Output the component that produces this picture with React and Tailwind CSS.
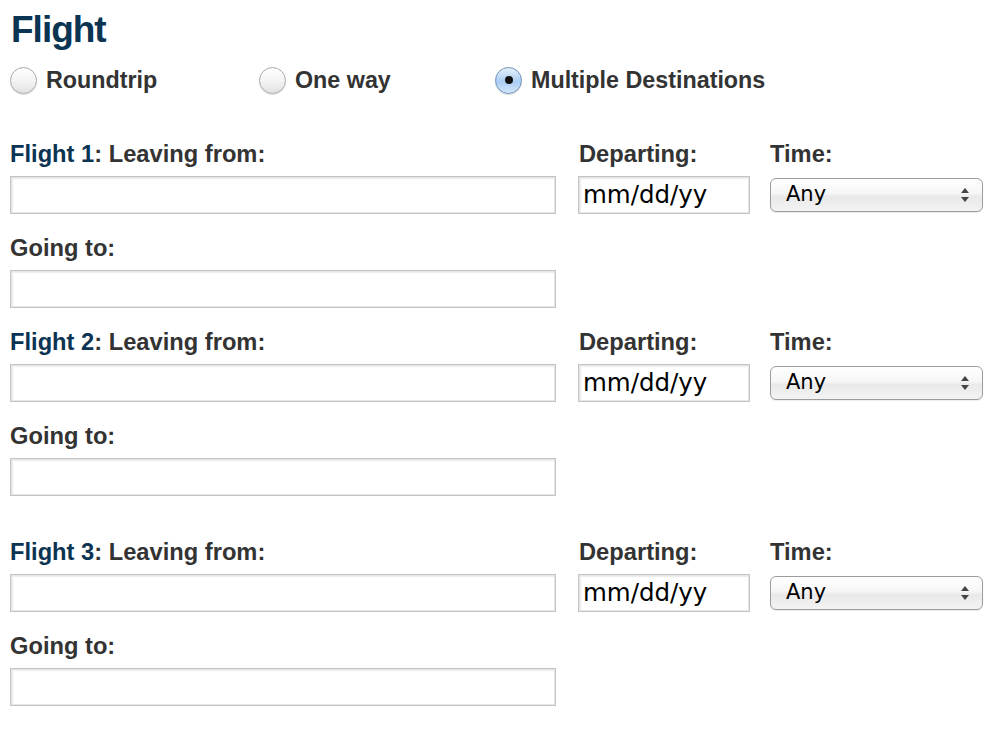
import React from "react";

const navy = "text-[#0b3352]";

function Radio({ checked }) {
  return (
    <span
      className={
        "relative flex h-[27px] w-[27px] shrink-0 items-center justify-center rounded-full border " +
        (checked
          ? "border-[#6f8fb4] bg-[linear-gradient(#e6f1fc,#a9cdf3_55%,#d4e8fb)] shadow-[0_1px_1px_rgba(0,0,0,0.15)]"
          : "border-[#a9a9a9] bg-[linear-gradient(#ffffff,#f4f4f4_50%,#e2e2e2)] shadow-[0_1px_1px_rgba(0,0,0,0.12)]")
      }
    >
      {checked && <span className="h-[8px] w-[8px] rounded-full bg-[#111]" />}
    </span>
  );
}

function TextBox({ className = "", children }) {
  return (
    <div
      className={
        "flex h-[38px] items-center border border-[#c4c4c4] bg-white shadow-[inset_0_0_0_1px_#e6e6e6,inset_1px_1px_1px_1px_#ececec] " +
        className
      }
    >
      {children}
    </div>
  );
}

function Select() {
  return (
    <div className="mt-[2px] flex h-[34px] w-[213px] items-center justify-between rounded-[6px] border border-[#9c9c9c] bg-[linear-gradient(#ffffff,#f6f6f6_45%,#e9e9e9_55%,#f3f3f3)] pl-[15px] pr-[12px] shadow-[0_1px_1px_rgba(0,0,0,0.08)]">
      <span className="font-['DejaVu_Sans',sans-serif] text-[21px] text-black">Any</span>
      <svg width="10" height="16" viewBox="0 0 10 16">
        <path d="M5 1 L9 6 L1 6 Z" fill="#444" />
        <path d="M5 15 L9 10 L1 10 Z" fill="#444" />
      </svg>
    </div>
  );
}

function Label({ children, className = "" }) {
  return (
    <div className={"h-[26px] whitespace-nowrap text-[23.7px] font-bold leading-[26px] text-[#333] " + className}>
      {children}
    </div>
  );
}

function FlightBlock({ n, className = "" }) {
  return (
    <div className={"flex flex-col " + className}>
      <div className="flex">
        <div className="flex w-[546px] flex-col gap-[9px]">
          <Label>
            <span className={navy}>Flight {n}</span>: Leaving from:
          </Label>
          <TextBox />
        </div>
        <div className="ml-[22px] flex w-[172px] flex-col gap-[9px]">
          <Label className="pl-[1px]">Departing:</Label>
          <TextBox className="pl-[4px]">
            <span className="font-['DejaVu_Sans',sans-serif] text-[24.5px] leading-none text-black">mm/dd/yy</span>
          </TextBox>
        </div>
        <div className="ml-[20px] flex flex-col gap-[9px]">
          <Label>Time:</Label>
          <Select />
        </div>
      </div>
      <div className="mt-[21px] flex w-[546px] flex-col gap-[9px]">
        <Label>Going to:</Label>
        <TextBox />
      </div>
    </div>
  );
}

export default function App() {
  return (
    <div className="min-h-[742px] w-[1004px] bg-white pl-[10px] font-['Liberation_Sans',Arial,sans-serif]">
      <div className={"pl-[1px] pt-[8px] text-[37px] font-bold leading-[44px] tracking-[-1px] " + navy}>
        Flight
      </div>
      <div className="mt-[13px] flex h-[30px] items-center text-[23.3px] font-bold text-[#333]">
        <div className="flex w-[249px] items-center">
          <Radio />
          <span className="ml-[9px]">Roundtrip</span>
        </div>
        <div className="flex w-[236px] items-center">
          <Radio />
          <span className="ml-[9px]">One way</span>
        </div>
        <div className="flex items-center">
          <Radio checked />
          <span className="ml-[9px]">Multiple Destinations</span>
        </div>
      </div>
      <div className="mt-[46px]">
        <FlightBlock n={1} />
        <FlightBlock n={2} className="mt-[21px]" />
        <FlightBlock n={3} className="mt-[43px]" />
      </div>
    </div>
  );
}
